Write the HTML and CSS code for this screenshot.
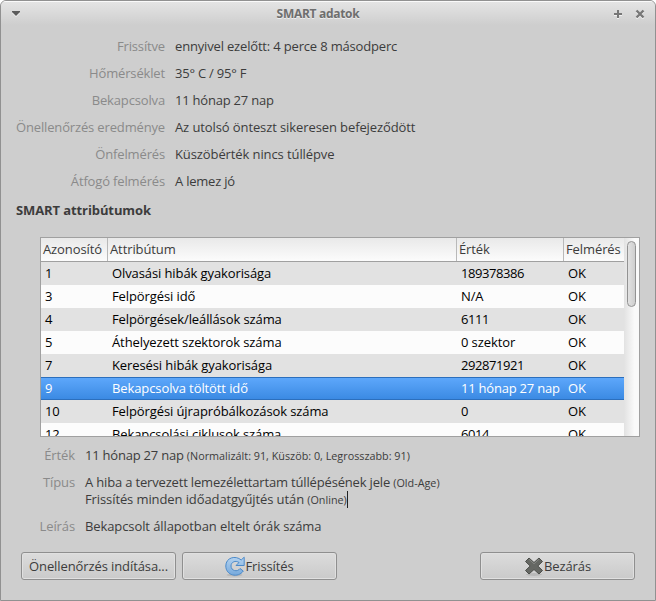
FILE: index.html
```html
<!DOCTYPE html>
<html lang="hu">
<head>
<meta charset="utf-8">
<title>SMART adatok</title>
<link rel="stylesheet" href="styles.css">
</head>
<body>
<div class="window">
  <header class="titlebar">
    <svg class="menu" width="10" height="8" viewBox="0 0 10 8"><path d="M1 3h8L5 7z" fill="#f2f2f2"/><path d="M1 1h8v1L5 6 1 2z" fill="#5c5c5c"/></svg>
    <h1 class="title">SMART adatok</h1>
    <svg class="max" width="10" height="10" viewBox="0 0 10 10"><path d="M1 6h8M5 2v8" stroke="#f2f2f2" stroke-width="2"/><path d="M1 5h8M5 1v8" stroke="#777" stroke-width="2"/></svg>
    <svg class="close" width="10" height="10" viewBox="0 0 10 10"><path d="M1.500 2.500l7 7m0-7l-7 7" stroke="#f2f2f2" stroke-width="2.400"/><path d="M1.500 1.500l7 7m0-7l-7 7" stroke="#777" stroke-width="2.400"/></svg>
  </header>

  <dl class="summary">
    <dt>Frissítve</dt><dd class="tight">ennyivel ezelőtt: 4 perce 8 másodperc</dd>
    <dt>Hőmérséklet</dt><dd class="numeric">35° C / 95° F</dd>
    <dt>Bekapcsolva</dt><dd class="numeric">11 hónap 27 nap</dd>
    <dt>Önellenőrzés eredménye</dt><dd>Az utolsó önteszt sikeresen befejeződött</dd>
    <dt>Önfelmérés</dt><dd>Küszöbérték nincs túllépve</dd>
    <dt>Átfogó felmérés</dt><dd class="numeric">A lemez jó</dd>
  </dl>

  <h2 class="section">SMART attribútumok</h2>

  <div class="list">
    <div class="table">
      <div class="row head"><span>Azonosító</span><span>Attribútum</span><span>Érték</span><span>Felmérés</span></div>
      <div class="row"><span>1</span><span>Olvasási hibák gyakorisága</span><span class="long">189378386</span><span>OK</span></div>
      <div class="row"><span>3</span><span>Felpörgési idő</span><span>N/A</span><span>OK</span></div>
      <div class="row"><span>4</span><span>Felpörgések/leállások száma</span><span class="long">6111</span><span>OK</span></div>
      <div class="row"><span>5</span><span>Áthelyezett szektorok száma</span><span>0 szektor</span><span>OK</span></div>
      <div class="row"><span>7</span><span>Keresési hibák gyakorisága</span><span class="long">292871921</span><span>OK</span></div>
      <div class="row selected"><span>9</span><span>Bekapcsolva töltött idő</span><span class="numeric">11 hónap 27 nap</span><span>OK</span></div>
      <div class="row"><span>10</span><span>Felpörgési újrapróbálkozások száma</span><span>0</span><span>OK</span></div>
      <div class="row"><span>12</span><span>Bekapcsolási ciklusok száma</span><span class="long">6014</span><span>OK</span></div>
    </div>
    <div class="scrollbar"><div class="thumb"></div></div>
  </div>

  <dl class="details">
    <dt>Érték</dt><dd class="numeric">11 hónap 27 nap <small>(Normalizált: 91, Küszöb: 0, Legrosszabb: 91)</small></dd>
    <dt>Típus</dt><dd><span class="tight">A hiba a tervezett lemezélettartam túllépésének jele </span><small>(Old-Age)</small><br>Frissítés minden időadatgyűjtés után <small>(Online)</small><i class="caret"></i></dd>
    <dt>Leírás</dt><dd>Bekapcsolt állapotban eltelt órák száma</dd>
  </dl>

  <footer class="actions">
    <button class="button">Önellenőrzés indítása...</button>
    <button class="button"><svg width="20" height="21" viewBox="0 0 20 21"><defs><linearGradient id="blue" x1="0" y1="0" x2="0" y2="1"><stop offset="0" stop-color="#b4d2ef"/><stop offset="1" stop-color="#76a9dc"/></linearGradient></defs><ellipse cx="9.500" cy="19" rx="8" ry="1.500" fill="#b8b8b8"/><path d="M19.200 1.200v8.300H11l3-3C10.500 4 6 6 6 10c0 4.800 6.500 6.500 9 2.500l3.300 2.500C13 22.500.8 19.500.8 10 .8 1.500 10.500-1 16.200 4z" fill="url(#blue)" stroke="#4b8aca"/></svg>Frissítés</button>
    <button class="button last"><svg width="20" height="20" viewBox="0 0 20 20"><ellipse cx="10" cy="18.500" rx="8" ry="1.500" fill="#b8b8b8"/><path d="M5 2l5 4.500L15 2l3.500 3.500-4.700 4.500 4.700 4.500L15 18l-5-4.500L5 18l-3.500-3.500L6.200 10 1.500 5.500z" fill="#656763" stroke="#4c4e4a" stroke-linejoin="round"/><path d="M5 3.300l5 4.500 5-4.500" fill="none" stroke="#858783"/></svg>Bezárás</button>
  </footer>
</div>
</body>
</html>
```
FILE: styles.css
```css
* { box-sizing: border-box; }
body {
  margin: 0;
  background: #fff;
  font: 13px/17px "Open Sans", "Noto Sans", sans-serif;
  letter-spacing: -0.1px;
  color: #3c3c3c;
}
h1, h2, dl, dd { margin: 0; }
.window {
  width: 656px;
  height: 601px;
  border: 1px solid #919191;
  border-radius: 6px 6px 0 0;
  background: #cecece;
  overflow: hidden;
}
.titlebar {
  height: 24px;
  border-top: 1px solid #fafafa;
  background: linear-gradient(#e4e4e4, #cecece);
  display: grid;
  grid-template-columns: 28px 1fr 11px 31px;
  align-items: center;
}
.menu { margin-left: 10px; }
.title {
  font-size: 12px;
  font-weight: 700;
  letter-spacing: -0.3px;
  color: #6e6e6e;
  text-shadow: 0 1px #eee;
  text-align: center;
  padding-right: 6px;
}
.close { margin-left: 11px; }
.summary {
  display: grid;
  grid-template-columns: 149px 1fr;
  gap: 10px;
  margin: 13px 15px 0;
}
.summary dt, .details dt { color: #8a8a8a; text-align: right; white-space: nowrap; }
.summary dt { letter-spacing: -0.15px; }
dd { white-space: nowrap; }
.tight { letter-spacing: -0.17px; }
.numeric { letter-spacing: -0.22px; }
.long { letter-spacing: -0.42px; }
.section { margin: 12px 15px 0; font-size: 13px; line-height: 17px; }
.list {
  margin: 18px 0 0 39px;
  width: 600px;
  height: 200px;
  border: 1px solid #a0a0a0;
  background: #fcfcfc;
  display: flex;
  overflow: hidden;
}
.table { width: 583px; }
.row {
  height: 23px;
  display: grid;
  grid-template-columns: 67px 349px 107px 60px;
  line-height: 23px;
  color: #000;
  background: #fcfcfc;
  white-space: nowrap;
}
.row:nth-child(even) { background: #e2e2e2; }
.row span { padding-left: 4px; }
.head {
  height: 24px;
  border-bottom: 1px solid #a0a0a0;
  background: linear-gradient(#e9e9e9, #fcfcfc);
  color: #3c3c3c;
}
.head span { padding-left: 2px; border-right: 1px solid #b9b9b9; }
.head span:last-child { border-right: 0; }
.row.selected {
  background: linear-gradient(#5da7fb, #3b8ae3);
  border: solid #2c6fbd;
  border-width: 1px 0;
  line-height: 21px;
  color: #fff;
}
.scrollbar { flex: 1; padding: 3px; background: linear-gradient(90deg, #e2e2e2, #fafafa 70%); }
.thumb {
  width: 9px;
  height: 66px;
  border: 1px solid #929292;
  border-radius: 4.5px;
  background: linear-gradient(90deg, #e2e2e2, #cecece);
}
.details {
  display: grid;
  grid-template-columns: 59px 1fr;
  gap: 10px;
  margin: 10px 15px 0;
}
small { font-size: 10.8px; line-height: 1; letter-spacing: 0; }
.caret { display: inline-block; width: 1px; height: 17px; background: #222; vertical-align: -4px; }
.actions { display: flex; gap: 6px; margin: 17px 20px 0; }
.button {
  width: 155px;
  height: 28px;
  padding: 0;
  border: 1px solid #8f8f8f;
  border-radius: 3px;
  background: linear-gradient(#dcdcdc, #cacaca);
  box-shadow: inset 0 0 0 1px #e0e0e0;
  font: inherit;
  letter-spacing: -0.1px;
  color: #3c3c3c;
  display: flex;
  align-items: center;
  justify-content: center;
  white-space: nowrap;
}
.last { margin-left: auto; }
```
